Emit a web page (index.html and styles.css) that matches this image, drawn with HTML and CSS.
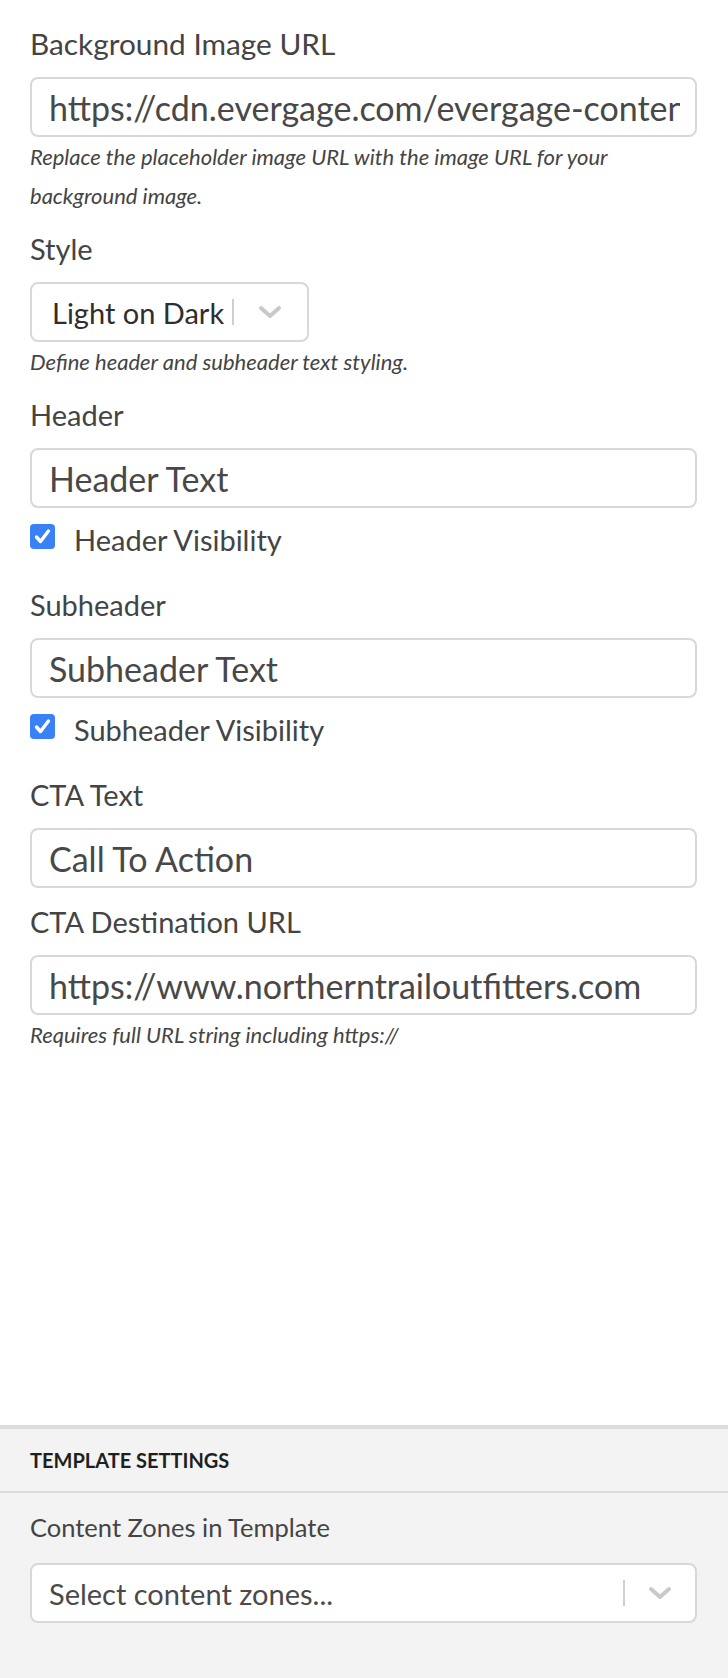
FILE: index.html
```html
<!DOCTYPE html>
<html lang="en">
<head>
<meta charset="utf-8">
<title>Template Editor</title>
<link rel="stylesheet" href="styles.css">
</head>
<body>
<div class="page">
  <main class="fields">
    <div class="group">
      <label class="label label-wide">Background Image URL</label>
      <div class="input"><span class="value">https://cdn.evergage.com/evergage-content/nto/hero-background.jpg</span></div>
      <p class="help">Replace the placeholder image URL with the image URL for your background image.</p>
    </div>
    <div class="group">
      <label class="label">Style</label>
      <div class="select select-small">
        <span class="value">Light on Dark</span>
        <span class="sep"></span>
        <svg class="chev" viewBox="0 0 24 14" width="24" height="14"><polyline points="3,3 12,11 21,3" fill="none" stroke="#c9c9c9" stroke-width="4" stroke-linecap="round" stroke-linejoin="round"/></svg>
      </div>
      <p class="help">Define header and subheader text styling.</p>
    </div>
    <div class="group">
      <label class="label">Header</label>
      <div class="input"><span class="value">Header Text</span></div>
      <div class="check-row">
        <span class="checkbox"><svg viewBox="0 0 25 25" width="25" height="25"><polyline points="6.5,13 10.5,17.5 18.5,7" fill="none" stroke="#fff" stroke-width="3.4" stroke-linecap="round" stroke-linejoin="round"/></svg></span>
        <span class="check-label">Header Visibility</span>
      </div>
    </div>
    <div class="group">
      <label class="label">Subheader</label>
      <div class="input"><span class="value">Subheader Text</span></div>
      <div class="check-row">
        <span class="checkbox"><svg viewBox="0 0 25 25" width="25" height="25"><polyline points="6.5,13 10.5,17.5 18.5,7" fill="none" stroke="#fff" stroke-width="3.4" stroke-linecap="round" stroke-linejoin="round"/></svg></span>
        <span class="check-label">Subheader Visibility</span>
      </div>
    </div>
    <div class="group">
      <label class="label">CTA Text</label>
      <div class="input"><span class="value">Call To Action</span></div>
    </div>
    <div class="group">
      <label class="label">CTA Destination URL</label>
      <div class="input"><span class="value">https://www.northerntrailoutfitters.com</span></div>
      <p class="help">Requires full URL string including https://</p>
    </div>
  </main>
  <section class="settings">
    <h2 class="settings-title">TEMPLATE SETTINGS</h2>
    <div class="settings-body">
      <label class="label label-small">Content Zones in Template</label>
      <div class="select select-full">
        <span class="value placeholder">Select content zones...</span>
        <span class="sep"></span>
        <svg class="chev" viewBox="0 0 24 14" width="24" height="14"><polyline points="3,3 12,11 21,3" fill="none" stroke="#c9c9c9" stroke-width="4" stroke-linecap="round" stroke-linejoin="round"/></svg>
      </div>
    </div>
  </section>
</div>
</body>
</html>
```
FILE: styles.css
```css
* { box-sizing: border-box; }
html, body { margin: 0; padding: 0; background: #fff; }
body {
  font-family: Lato, "Open Sans", sans-serif;
  color: #444;
}
.page {
  width: 728px;
  min-height: 1678px;
  display: flex;
  flex-direction: column;
}
.fields {
  flex: 1;
  padding: 24px 31px 0 30px;
}
.group { margin-bottom: 14px; }
.label {
  display: block;
  font-size: 29px;
  line-height: 40px;
  color: #444;
  margin-bottom: 13px;
}
.label-wide { font-size: 29.8px; }
.input, .select {
  height: 60px;
  border: 2px solid #d6d8db;
  border-radius: 8px;
  background: #fff;
  display: flex;
  align-items: center;
  overflow: hidden;
}
.input { padding: 0 15px 0 17px; }
.input .value {
  font-size: 34px;
  color: #484848;
  white-space: nowrap;
  overflow: hidden;
}
.help {
  margin: 0;
  font-size: 22px;
  line-height: 39px;
  font-style: italic;
  color: #444;
}
.select-small { width: 279px; padding-left: 20px; }
.select .value {
  font-size: 29px;
  color: #2e2e2e;
  white-space: nowrap;
}
.sep {
  width: 2px;
  height: 26px;
  background: #cfcfcf;
  margin-left: 8px;
}
.chev { margin-left: 24px; flex: none; }
.check-row {
  display: flex;
  align-items: flex-start;
  height: 51px;
  margin-top: 12px;
  padding-bottom: 11px;
}
.checkbox {
  width: 25px;
  height: 25px;
  margin-top: 4px;
  border-radius: 4px;
  background: #3a80f6;
  display: flex;
  flex: none;
}
.check-label {
  margin-left: 19px;
  font-size: 29px;
  line-height: 40px;
  color: #444;
}
.settings {
  height: 253px;
  background: #f3f3f3;
  border-top: 4px solid #dcdcdc;
}
.settings-title {
  margin: 0;
  height: 64px;
  padding-left: 30px;
  font-size: 20px;
  font-weight: 700;
  line-height: 62px;
  color: #1f1f1f;
  border-bottom: 2px solid #dadada;
}
.settings-body { padding: 14px 31px 0 30px; }
.label-small { font-size: 25.5px; margin-bottom: 16px; }
.select-full { padding-left: 17px; }
.select-full .value { flex: 1; color: #4a4a4a; }
.select-full .sep { margin-left: 0; }
.select-full .chev { margin-left: 23px; margin-right: 23px; }
```
